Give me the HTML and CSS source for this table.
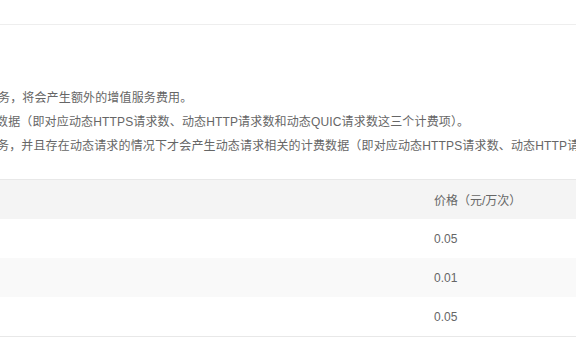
FILE: index.html
```html
<!DOCTYPE html>
<html lang="zh-CN">
<head>
<meta charset="utf-8">
<link rel="stylesheet" href="styles.css">
</head>
<body>
<div class="page">
  <div class="topbar"></div>
  <div class="notes">
    <p class="note n1">务，将会产生额外的增值服务费用。</p>
    <p class="note n2">数据（即对应动态HTTPS请求数、动态HTTP请求数和动态QUIC请求数这三个计费项）。</p>
    <p class="note n3">务，并且存在动态请求的情况下才会产生动态请求相关的计费数据（即对应动态HTTPS请求数、动态HTTP请求数和动态QUIC请求数这三个计费项）。</p>
  </div>
  <table class="price-table">
    <colgroup><col class="c-name"><col class="c-price"></colgroup>
    <thead>
      <tr><th>计费项</th><th>价格（元/万次）</th></tr>
    </thead>
    <tbody>
      <tr><td>动态HTTPS请求数</td><td>0.05</td></tr>
      <tr class="alt"><td>动态HTTP请求数</td><td>0.01</td></tr>
      <tr><td>动态QUIC请求数</td><td>0.05</td></tr>
    </tbody>
  </table>
</div>
</body>
</html>
```

FILE: styles.css
```css
html, body {
  margin: 0;
  padding: 0;
  background: #fff;
  overflow: hidden;
}
.page {
  width: 576px;
  height: 356px;
  overflow: hidden;
  font-family: "Liberation Sans", "Noto Sans CJK SC", sans-serif;
  font-size: 12px;
  color: #666;
}
.topbar {
  height: 24px;
  border-bottom: 1px solid #eeeeee;
}
.notes {
  margin-top: 61px;
  white-space: nowrap;
}
.note {
  margin: 0;
  line-height: 24px;
  letter-spacing: 0.15px;
}
.n1 { margin-left: -2px; }
.n2 { margin-left: -4px; }
.n3 { margin-left: -3px; }
.price-table {
  margin-top: 21px;
  margin-left: -200px;
  width: 900px;
  table-layout: fixed;
  border-collapse: collapse;
}
.c-name { width: 618px; }
.price-table th,
.price-table td {
  text-align: left;
  font-weight: normal;
  padding: 0 16px;
  white-space: nowrap;
  overflow: hidden;
}
.price-table thead tr {
  background: #f4f4f4;
  border-top: 1px solid #e8e8e8;
}
.price-table th {
  height: 39px;
  color: #666;
}
.price-table td {
  height: 39px;
}
.price-table tbody tr.alt {
  background: #f9f9f9;
}
.price-table tbody tr:last-child {
  border-bottom: 1px solid #e8e8e8;
}
.price-table td:first-child,
.price-table th:first-child {
  color: transparent;
}
```
